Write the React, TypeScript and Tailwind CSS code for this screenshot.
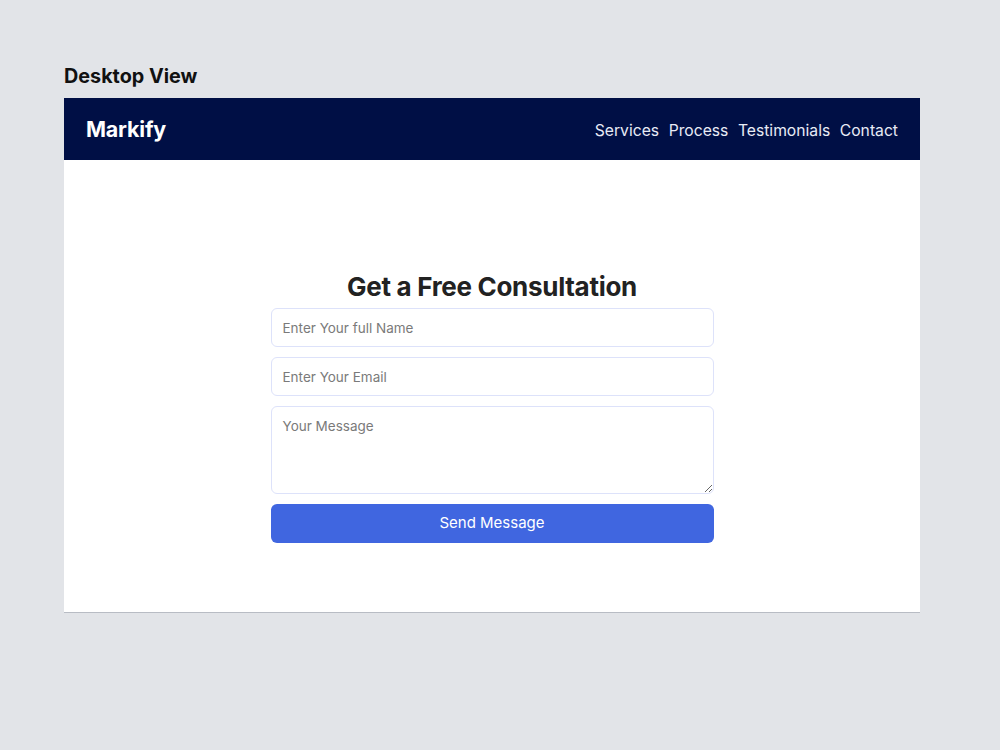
export default function App() {
  return (
    <div
      className="w-[1000px] h-[750px] bg-[#e2e4e8] pt-[63px] pl-[64px]"
      style={{ fontFamily: "Inter, 'Liberation Sans', sans-serif" }}
    >
      <h1 className="text-[19.8px] font-bold text-[#111] leading-[26px]">Desktop View</h1>

      <div className="mt-[9px] w-[856px] h-[515px] bg-white flex flex-col border-b border-[#b8bcc4]">
        {/* Navbar */}
        <nav className="h-[62px] bg-[#000f45] flex items-center justify-between pl-[22px] pr-[22px] shrink-0">
          <span className="text-white text-[21.5px] font-bold tracking-[-0.2px]">Markify</span>
          <ul className="flex items-center gap-[9.5px] text-[#e8ebf5] text-[15.7px] pt-[4px]">
            <li>Services</li>
            <li>Process</li>
            <li>Testimonials</li>
            <li>Contact</li>
          </ul>
        </nav>

        {/* Form */}
        <div className="flex-1 flex flex-col items-center pt-[110px]">
          <h2 className="text-[26px] font-bold text-[#222] leading-[34px] tracking-[-0.3px]">
            Get a Free Consultation
          </h2>
          <form className="w-[443px] flex flex-col gap-[10px] mt-[4px]" onSubmit={(e) => e.preventDefault()}>
            <input
              type="text"
              placeholder="Enter Your full Name"
              className="h-[39px] px-[11px] text-[13.5px] rounded-[6px] border border-[#dde2fa] placeholder-[#7a7a7a] outline-none"
            />
            <input
              type="email"
              placeholder="Enter Your Email"
              className="h-[39px] px-[11px] text-[13.5px] rounded-[6px] border border-[#dde2fa] placeholder-[#7a7a7a] outline-none"
            />
            <textarea
              placeholder="Your Message"
              className="h-[88px] px-[11px] py-[9px] text-[13.5px] rounded-[6px] border border-[#dde2fa] placeholder-[#7a7a7a] outline-none"
            />
            <button
              type="submit"
              className="h-[39px] rounded-[6px] bg-[#4066e0] text-white text-[15px]"
            >
              Send Message
            </button>
          </form>
        </div>
      </div>
    </div>
  );
}
